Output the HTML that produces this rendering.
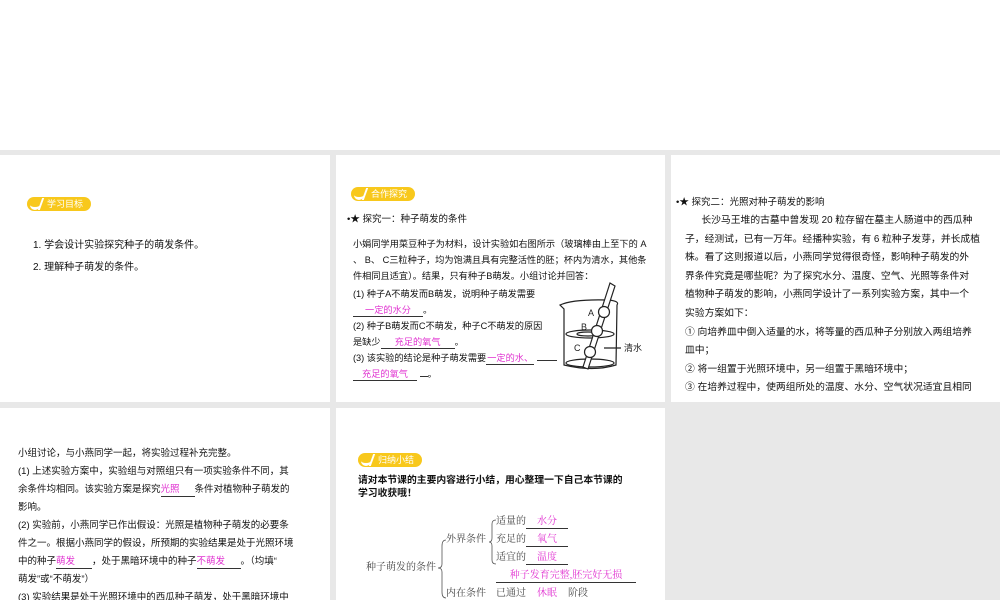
<!DOCTYPE html>
<html><head><meta charset="utf-8"><style>
*{margin:0;padding:0;box-sizing:border-box}
body{width:1000px;height:600px;overflow:hidden;background:#e8e8e8;font-family:"Liberation Sans","Noto Sans CJK SC",sans-serif;color:#111;position:relative}
.p{position:absolute;background:#fff;overflow:hidden}
.t{position:absolute;font-size:10px;line-height:20px;white-space:nowrap;font-family:"Liberation Serif","Noto Serif CJK SC",serif}
.s{position:absolute;font-size:9px;white-space:nowrap}
.m{color:#e030d0}
.u{display:inline-block;border-bottom:1px solid #333;text-align:center;line-height:12px;vertical-align:baseline}
.badge{position:absolute;height:14px;border-radius:7px;background:#f8c81c;color:#fff;font-size:9px;line-height:14px;padding-left:20px;padding-right:8px}
.badge:before{content:"";position:absolute;left:3px;top:2px;width:10px;height:8px;border-bottom:3px solid #fff;border-left:0;border-radius:0 0 6px 6px}
.badge:after{content:"";position:absolute;left:13px;top:1px;width:2px;height:12px;background:#fff;transform:skew(-20deg)}
</style></head><body>
<div class="p" style="left:0;top:0;width:1000px;height:150px"></div>
<div class="p" style="left:0;top:155px;width:330px;height:247px">
 <div class="badge" style="left:27px;top:42px">学习目标</div>
 <div class="s" style="left:33px;top:81px;font-size:10px">1. 学会设计实验探究种子的萌发条件。</div>
 <div class="s" style="left:33px;top:103px;font-size:10px">2. 理解种子萌发的条件。</div>
</div>
<div class="p" style="left:336px;top:155px;width:329px;height:247px">
 <div class="badge" style="left:15px;top:32px">合作探究</div>
 <div class="s" style="left:11px;top:56px;font-size:9.5px">•★ 探究一：种子萌发的条件</div>
 <div class="s" style="left:17px;top:81px;line-height:16px;font-size:9.2px">小娟同学用菜豆种子为材料，设计实验如右图所示（玻璃棒由上至下的 A<br>、 B、 C三粒种子，均为饱满且具有完整活性的胚；杯内为清水，其他条<br>件相同且适宜）。结果，只有种子B萌发。小组讨论并回答：</div>
 <div class="s" style="left:17px;top:131px;line-height:16px;font-size:9.2px">(1) 种子A不萌发而B萌发，说明种子萌发需要<br><span class="u m" style="width:70px">一定的水分</span>。<br>(2) 种子B萌发而C不萌发，种子C不萌发的原因<br>是缺少<span class="u m" style="width:74px">充足的氧气</span>。<br>(3) 该实验的结论是种子萌发需要<span class="u m" style="width:48px">一定的水、</span> <span class="u" style="width:20px"></span><br><span class="u m" style="width:64px">充足的氧气</span> <span class="u" style="width:8px"></span>。</div>
 <svg style="position:absolute;left:222px;top:124px" width="100" height="100" viewBox="0 0 100 100" fill="none" stroke="#222" stroke-width="1.2">
  <path d="M2 26 Q15 20 50 21 Q62 22 59 26 L58 86 Q35 93 6 86 L6 30 Z"/>
  <ellipse cx="32" cy="55" rx="24" ry="4"/><ellipse cx="30" cy="55" rx="11" ry="2"/>
  <ellipse cx="32" cy="84" rx="24" ry="4"/>
  <path d="M52 4 L57 7 L30 90 L25 88 Z" fill="#fff"/>
  <circle cx="46" cy="33" r="5.5" fill="#fff"/><circle cx="39" cy="52" r="5.5" fill="#fff"/><circle cx="32" cy="73" r="5.5" fill="#fff"/>
  <text x="30" y="37" font-size="9" fill="#222" stroke="none">A</text><text x="23" y="51" font-size="9" fill="#222" stroke="none">B</text><text x="16" y="72" font-size="9" fill="#222" stroke="none">C</text>
  <path d="M46 69 H63"/><text x="66" y="72" font-size="9" fill="#222" stroke="none">清水</text>
 </svg>
</div>
<div class="p" style="left:671px;top:155px;width:329px;height:247px">
 <div class="s" style="left:5px;top:39px;font-size:9.5px">•★ 探究二：光照对种子萌发的影响</div>
 <div class="s" style="left:14px;top:57px;line-height:18.6px;font-size:9.8px">&nbsp;&nbsp;&nbsp;&nbsp;&nbsp;&nbsp;长沙马王堆的古墓中曾发现 20 粒存留在墓主人肠道中的西瓜种<br>子，经测试，已有一万年。经播种实验，有 6 粒种子发芽，并长成植<br>株。看了这则报道以后，小燕同学觉得很奇怪，影响种子萌发的外<br>界条件究竟是哪些呢？为了探究水分、温度、空气、光照等条件对<br>植物种子萌发的影响，小燕同学设计了一系列实验方案，其中一个<br>实验方案如下：<br>① 向培养皿中倒入适量的水，将等量的西瓜种子分别放入两组培养<br>皿中；<br>② 将一组置于光照环境中，另一组置于黑暗环境中；<br>③ 在培养过程中，使两组所处的温度、水分、空气状况适宜且相同</div>
</div>
<div class="p" style="left:0;top:408px;width:330px;height:192px">
 <div class="s" style="left:18px;top:37px;line-height:18px;font-size:9.5px">小组讨论，与小燕同学一起，将实验过程补充完整。<br>(1) 上述实验方案中，实验组与对照组只有一项实验条件不同，其<br>余条件均相同。该实验方案是探究<span class="u m" style="width:34px;text-align:left">光照</span>条件对植物种子萌发的<br>影响。<br>(2) 实验前，小燕同学已作出假设：光照是植物种子萌发的必要条<br>件之一。根据小燕同学的假设，所预期的实验结果是处于光照环境<br>中的种子<span class="u m" style="width:36px;text-align:left">萌发</span>，处于黑暗环境中的种子<span class="u m" style="width:44px;text-align:left">不萌发</span>。（均填“<br>萌发”或“不萌发”）<br>(3) 实验结果是处于光照环境中的西瓜种子萌发，处于黑暗环境中</div>
</div>
<div class="p" style="left:336px;top:408px;width:329px;height:192px">
 <div class="badge" style="left:22px;top:45px">归纳小结</div>
 <div class="s" style="left:22px;top:66px;line-height:13px;font-size:9.8px;font-weight:bold">请对本节课的主要内容进行小结，用心整理一下自己本节课的<br>学习收获哦！</div>
 <div class="t" style="left:30px;top:150px;color:#444">种子萌发的条件</div>
 <div class="t" style="left:110px;top:122px;color:#444">外界条件</div>
 <div class="t" style="left:110px;top:176px;color:#444">内在条件</div>
 <svg style="position:absolute;left:100px;top:110px" width="60" height="90" fill="none" stroke="#555" stroke-width="0.8">
  <path d="M10 22 Q6 22 6 28 V46 Q6 50 2 50 Q6 50 6 54 V74 Q6 80 10 80"/>
  <path d="M60 2 Q56 2 56 6 V20 Q56 24 53 24 Q56 24 56 28 V42 Q56 46 60 46"/>
 </svg>
 <div class="t" style="left:160px;top:104px;color:#444">适量的<span class="u m" style="width:42px">水分</span></div>
 <div class="t" style="left:160px;top:122px;color:#444">充足的<span class="u m" style="width:42px">氧气</span></div>
 <div class="t" style="left:160px;top:140px;color:#444">适宜的<span class="u m" style="width:42px">温度</span></div>
 <div class="t" style="left:160px;top:158px;color:#444"><span class="u m" style="width:140px">种子发育完整,胚完好无损</span></div>
 <div class="t" style="left:160px;top:176px;color:#444">已通过<span class="u m" style="width:42px">休眠</span>阶段</div>
</div>
</body></html>
